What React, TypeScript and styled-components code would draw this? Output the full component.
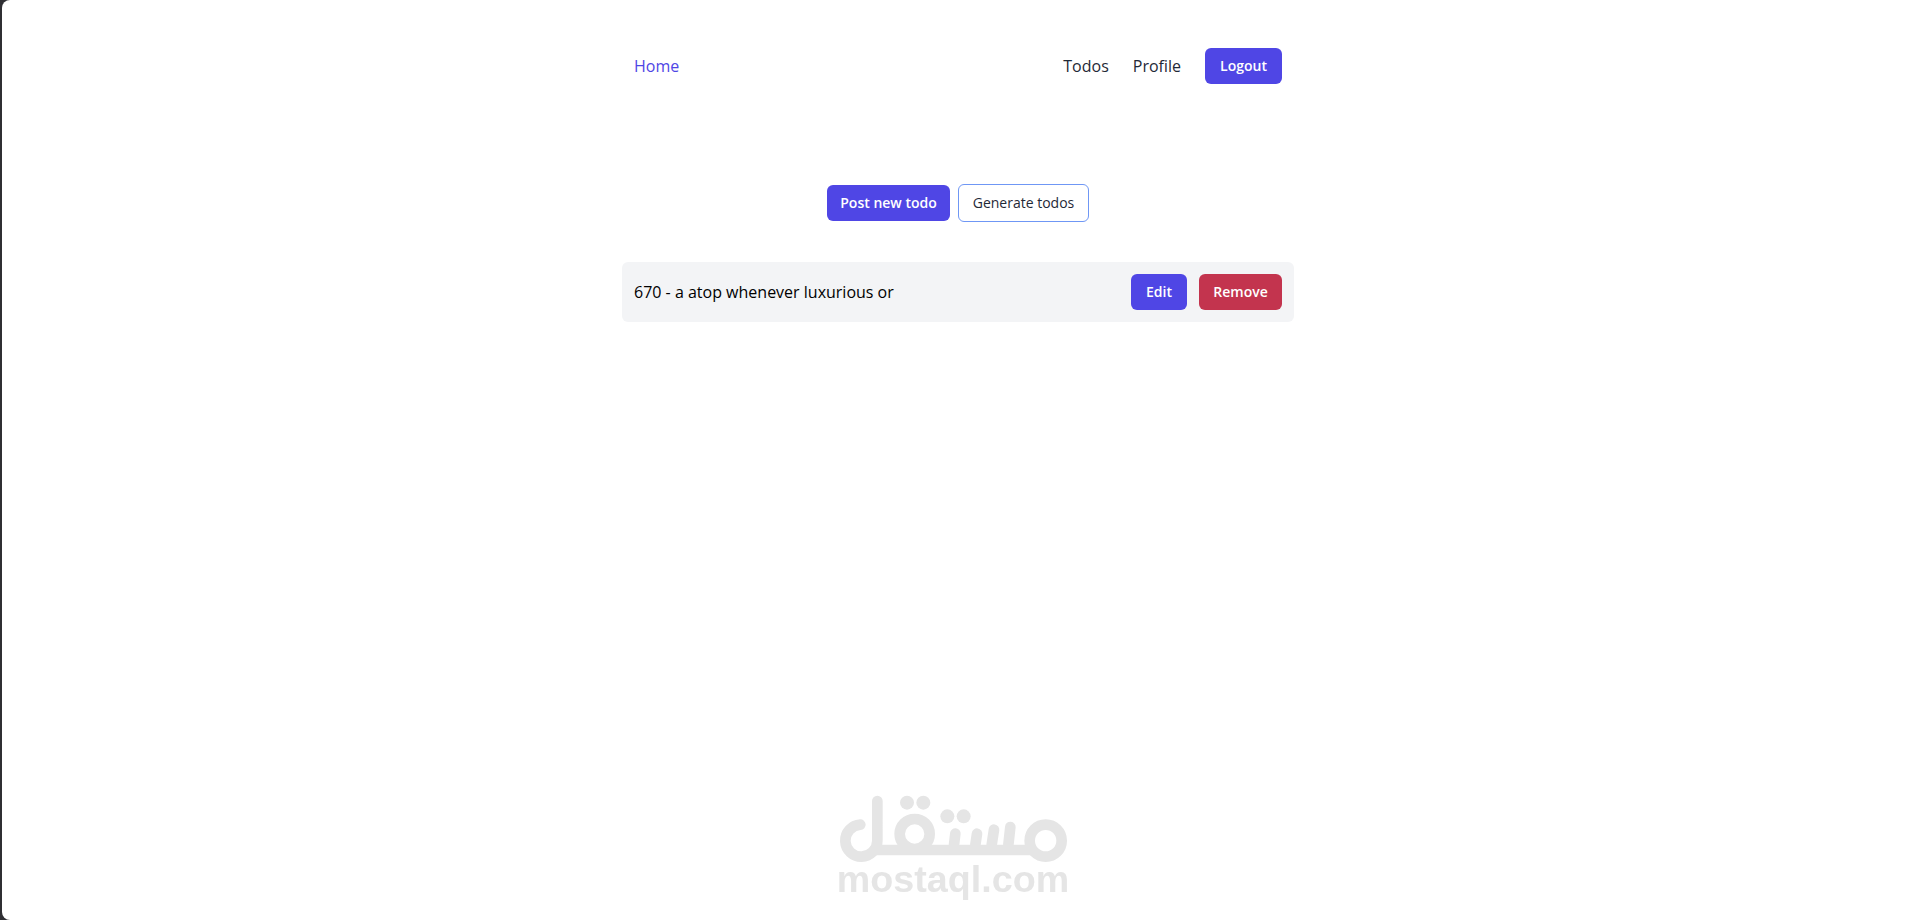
import React from 'react';
import styled, { createGlobalStyle } from 'styled-components';

const GlobalStyle = createGlobalStyle`
  *, *::before, *::after { box-sizing: border-box; }
  body {
    margin: 0;
    background: #2f2f33;
    color: #000;
    font-family: "Segoe UI", "Open Sans", "Noto Sans", sans-serif;
    font-size: 16px;
    line-height: 24px;
  }
`;

const Page = styled.div`
  min-height: 100vh;
  margin-left: 2px;
  padding: 48px 0 0 7px;
  border-radius: 8px 0 0 8px;
  background: #fff;
`;

const Column = styled.div`
  width: 100%;
  max-width: 672px;
  margin: 0 auto;
`;

const Header = styled.header`
  display: flex;
  align-items: center;
  justify-content: space-between;
  padding: 0 12px;
`;

const Nav = styled.nav`
  display: flex;
  align-items: center;
  gap: 24px;
`;

const NavLink = styled.a<{ $active?: boolean }>`
  color: ${({ $active }) => ($active ? '#4f46e5' : '#1f2937')};
  font-weight: 500;
  text-decoration: none;
`;

const tones = {
  primary: { fill: '#4f46e5', text: '#fff', border: 'none', weight: 600 },
  danger: { fill: '#c3344e', text: '#fff', border: 'none', weight: 600 },
  outline: { fill: '#fff', text: '#1f2937', border: '1px solid #6f97f5', weight: 500 },
};

const Button = styled.button<{ $tone?: keyof typeof tones; $width: number }>`
  width: ${({ $width }) => $width}px;
  padding: 8px 0;
  border: ${({ $tone = 'primary' }) => tones[$tone].border};
  border-radius: 6px;
  background: ${({ $tone = 'primary' }) => tones[$tone].fill};
  color: ${({ $tone = 'primary' }) => tones[$tone].text};
  font-family: inherit;
  font-size: 14px;
  font-weight: ${({ $tone = 'primary' }) => tones[$tone].weight};
  line-height: 20px;
  text-align: center;
  white-space: nowrap;
  cursor: pointer;
`;

const Actions = styled.div`
  display: flex;
  align-items: center;
  justify-content: center;
  gap: 8px;
  margin: 100px 0 40px;
`;

const TodoList = styled.ul`
  margin: 0;
  padding: 0;
  list-style: none;
`;

const TodoItem = styled.li`
  display: flex;
  align-items: center;
  gap: 12px;
  padding: 12px;
  border-radius: 6px;
  background: #f3f4f6;
`;

const TodoTitle = styled.span`
  flex: 1;
  font-weight: 500;
`;

const Watermark = styled.div`
  position: fixed;
  bottom: 17px;
  left: 0;
  right: 0;
  display: flex;
  justify-content: center;
  pointer-events: none;
`;

const Mark = styled.svg`
  display: block;
  width: 230px;
  height: 108px;
  overflow: visible;
`;

const Brand = () => (
  <Mark viewBox="58 50 690 324" role="img" aria-label="mostaql.com">
    <g fill="none" stroke="#e5e5e5" strokeWidth="32" strokeLinecap="round">
      <path d="M122 139A48 48 0 1 0 173 187V68" />
      <circle cx="285" cy="167" r="45" />
      <circle cx="678" cy="187" r="48" />
      <path d="M403 200L407 166M467 200L472 166M516 200L523 154M566 200L572 146" />
      <path d="M160 215H640" strokeLinecap="butt" />
    </g>
    <g fill="#e5e5e5">
      <circle cx="262" cy="73" r="21" />
      <circle cx="311" cy="73" r="21" />
      <circle cx="383" cy="114" r="21" />
      <circle cx="432" cy="114" r="21" />
      <text
        x="400"
        y="342"
        textAnchor="middle"
        fontFamily='"Liberation Sans", sans-serif'
        fontSize="113"
        fontWeight="700"
      >
        mostaql.com
      </text>
    </g>
  </Mark>
);

const todos = [{ id: 670, title: 'a atop whenever luxurious or' }];

export default function App() {
  return (
    <>
      <GlobalStyle />
      <Page>
        <Column>
          <Header>
            <NavLink href="#home" $active>Home</NavLink>
            <Nav>
              <NavLink href="#todos">Todos</NavLink>
              <NavLink href="#profile">Profile</NavLink>
              <Button type="button" $width={77}>Logout</Button>
            </Nav>
          </Header>
          <main>
            <Actions>
              <Button type="button" $width={123}>Post new todo</Button>
              <Button type="button" $tone="outline" $width={131}>Generate todos</Button>
            </Actions>
            <TodoList>
              {todos.map(({ id, title }) => (
                <TodoItem key={id}>
                  <TodoTitle>{`${id} - ${title}`}</TodoTitle>
                  <Button type="button" $width={56}>Edit</Button>
                  <Button type="button" $tone="danger" $width={83}>Remove</Button>
                </TodoItem>
              ))}
            </TodoList>
          </main>
        </Column>
      </Page>
      <Watermark>
        <Brand />
      </Watermark>
    </>
  );
}
